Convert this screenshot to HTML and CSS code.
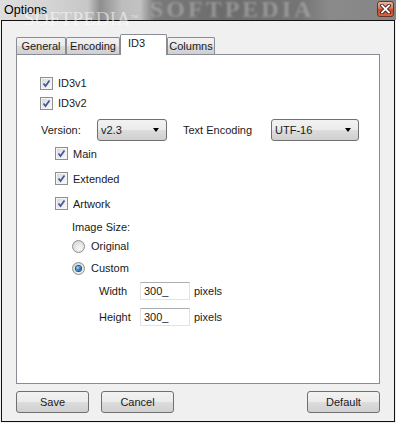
FILE: index.html
```html
<!DOCTYPE html>
<html>
<head>
    <meta charset="UTF-8">
    <title>Options</title>
    <link rel="stylesheet" href="styles.css">
</head>
<body>
    <div class="window">
        <div class="titlebar">
            <span class="title">Options</span>
            <span class="wm-big">SOFTPEDIA</span>
            <span class="close">
                <svg width="11" height="10" viewBox="0 0 11 10">
                    <path d="M2 1.5 L9 8.5 M9 1.5 L2 8.5" stroke="#3a1a12" stroke-width="3.6" stroke-linecap="square"/>
                    <path d="M2 1.5 L9 8.5 M9 1.5 L2 8.5" stroke="#fff" stroke-width="1.8" stroke-linecap="square"/>
                </svg>
            </span>
        </div>
        <span class="wm-small">SOFTPEDIA<sup>™</sup></span>

        <div class="frame">
            <div class="tabs">
                <div class="tab t-general">General</div>
                <div class="tab t-encoding">Encoding</div>
                <div class="tab t-id3 active">ID3</div>
                <div class="tab t-columns">Columns</div>
            </div>

            <div class="panel">
                <div class="row r-first">
                    <span class="cb"><svg viewBox="0 0 11 11"><path d="M2.5 5.5 L4.5 8 L8.5 2.5" fill="none" stroke="#3f5796" stroke-width="1.7"/></svg></span>
                    <span class="lbl">ID3v1</span>
                </div>
                <div class="row">
                    <span class="cb"><svg viewBox="0 0 11 11"><path d="M2.5 5.5 L4.5 8 L8.5 2.5" fill="none" stroke="#3f5796" stroke-width="1.7"/></svg></span>
                    <span class="lbl">ID3v2</span>
                </div>

                <div class="row r-version">
                    <span class="ver-label">Version:</span>
                    <span class="select sel-ver">v2.3<i class="arrow"></i></span>
                    <span class="enc-label">Text Encoding</span>
                    <span class="select sel-enc">UTF-16<i class="arrow"></i></span>
                </div>

                <div class="sub">
                    <div class="row r-tall">
                        <span class="cb"><svg viewBox="0 0 11 11"><path d="M2.5 5.5 L4.5 8 L8.5 2.5" fill="none" stroke="#3f5796" stroke-width="1.7"/></svg></span>
                        <span class="lbl">Main</span>
                    </div>
                    <div class="row r-tall">
                        <span class="cb"><svg viewBox="0 0 11 11"><path d="M2.5 5.5 L4.5 8 L8.5 2.5" fill="none" stroke="#3f5796" stroke-width="1.7"/></svg></span>
                        <span class="lbl">Extended</span>
                    </div>
                    <div class="row r-tall">
                        <span class="cb"><svg viewBox="0 0 11 11"><path d="M2.5 5.5 L4.5 8 L8.5 2.5" fill="none" stroke="#3f5796" stroke-width="1.7"/></svg></span>
                        <span class="lbl">Artwork</span>
                    </div>
                </div>

                <div class="size">
                    <div class="row r-size">Image Size:</div>
                    <div class="row r-orig">
                        <span class="rb"></span>
                        <span class="rlbl">Original</span>
                    </div>
                    <div class="row r-custom">
                        <span class="rb checked"><i></i></span>
                        <span class="rlbl">Custom</span>
                    </div>
                    <div class="dims">
                        <div class="row r-width">
                            <span class="dim-label">Width</span>
                            <span class="input">300_</span>
                            <span class="unit">pixels</span>
                        </div>
                        <div class="row r-height">
                            <span class="dim-label">Height</span>
                            <span class="input">300_</span>
                            <span class="unit">pixels</span>
                        </div>
                    </div>
                </div>
            </div>

            <div class="buttons">
                <span class="btn">Save</span>
                <span class="btn">Cancel</span>
                <span class="spacer"></span>
                <span class="btn">Default</span>
            </div>
        </div>
    </div>
</body>
</html>
```

FILE: styles.css
```css
html, body {
    margin: 0;
    padding: 0;
    background: #f0f0f0;
}
body {
    font-family: 'Liberation Sans', Arial, sans-serif;
    font-size: 11px;
    color: #1a1a1a;
}
.window {
    position: relative;
    width: 396px;
    height: 423px;
    overflow: hidden;
}
.titlebar {
    position: relative;
    height: 20px;
    display: flex;
    align-items: flex-start;
    justify-content: space-between;
    overflow: hidden;
    background: linear-gradient(to right, #dedede 0, #d4d4d4 50px, #c6c6c6 88px, #8e8e8e 100px, #bdbdbd 122px, #c2c2c2 140px, #7a7a7a 155px, #6c6c6c 220px, #747474 300px, #8a8a8a 330px, #858585 100%);
}
.title {
    position: relative;
    z-index: 1;
    padding: 3px 0 0 4px;
    font-size: 12.5px;
    line-height: 15px;
    color: #000;
}
.wm-big {
    position: absolute;
    left: 150px;
    top: -3px;
    font-family: 'Liberation Serif', serif;
    font-size: 24px;
    line-height: 24px;
    font-weight: bold;
    letter-spacing: 3px;
    color: rgba(190, 190, 190, 0.5);
    filter: blur(1px);
}
.wm-small {
    position: absolute;
    left: 24px;
    top: 9px;
    z-index: 3;
    font-family: 'Liberation Serif', serif;
    font-size: 19px;
    letter-spacing: 0.5px;
    line-height: 19px;
    color: rgba(255, 255, 255, 0.55);
}
.wm-small sup {
    font-size: 7px;
    vertical-align: top;
}
.close {
    position: relative;
    z-index: 1;
    width: 15px;
    height: 14px;
    margin: 1px 2px 0 0;
    border: 1px solid #6b3324;
    border-radius: 3px;
    display: flex;
    align-items: center;
    justify-content: center;
    background: linear-gradient(to bottom, #eeb4a0 0, #d9775a 45%, #c44a2c 55%, #d8643f 100%);
}

.frame {
    margin-left: 1px;
    width: 394px;
    height: 402px;
    box-sizing: border-box;
    border: 1px solid #111;
    padding: 13px 14px 0 14px;
    background: #f0f0f0;
}

/* tabs */
.tabs {
    display: flex;
    align-items: flex-end;
    height: 20px;
}
.tab {
    height: 17px;
    box-sizing: border-box;
    text-align: center;
    line-height: 16px;
    border: 1px solid #898c95;
    border-bottom: none;
    border-radius: 2px 2px 0 0;
    background: linear-gradient(to bottom, #f2f2f2 0, #ebebeb 50%, #dddddd 51%, #cfcfcf 100%);
}
.t-general { width: 50px; }
.t-encoding { width: 54px; }
.t-id3 { width: 47px; }
.t-columns { width: 48px; }
.tab.active {
    position: relative;
    z-index: 2;
    height: 21px;
    margin-bottom: -1px;
    padding: 1px 0 0 7px;
    text-align: left;
    line-height: 14px;
    background: #fff;
}

.panel {
    height: 330px;
    box-sizing: border-box;
    border: 1px solid #898c95;
    background: #fff;
    padding-left: 23px;
}

.row {
    display: flex;
    align-items: center;
    height: 20px;
}
.r-first {
    margin-top: 18px;
}
.r-version {
    margin-top: 5px;
    height: 23px;
    margin-left: 1px;
}
.r-tall {
    height: 25px;
}
.sub {
    padding-left: 15px;
}
.lbl {
    margin-left: 5px;
}
.rlbl {
    margin-left: 6px;
}

.cb {
    width: 11px;
    height: 11px;
    border: 1px solid #8e8f8f;
    background: linear-gradient(135deg, #d6d6d6 0, #ececec 55%, #fbfbfb 100%);
    box-shadow: inset 0 0 0 1px #f4f4f4;
    display: inline-flex;
}
.cb svg {
    width: 11px;
    height: 11px;
}

.ver-label {
    width: 56px;
}
.enc-label {
    width: 88px;
    margin-left: 16px;
}
.select {
    position: relative;
    height: 22px;
    box-sizing: border-box;
    border: 1px solid #707070;
    border-radius: 3px;
    padding-left: 3px;
    line-height: 20px;
    background: linear-gradient(to bottom, #f2f2f2 0, #ebebeb 50%, #dddddd 51%, #cfcfcf 100%);
}
.sel-ver {
    width: 70px;
}
.sel-enc {
    width: 88px;
}
.arrow {
    position: absolute;
    right: 7px;
    top: 8px;
    width: 0;
    height: 0;
    border-left: 3.5px solid transparent;
    border-right: 3.5px solid transparent;
    border-top: 4px solid #000;
}

.size {
    padding-left: 32px;
}
.r-size {
    height: 22px;
}
.r-orig {
    height: 14px;
    margin-top: 1px;
}
.r-custom {
    height: 24px;
    margin-top: 3px;
}
.rb {
    width: 11px;
    height: 11px;
    border-radius: 50%;
    border: 1px solid #8e8f8f;
    background: radial-gradient(circle at 60% 65%, #f6f6f6 0, #e4e4e4 50%, #c9c9c9 100%);
    display: inline-flex;
    align-items: center;
    justify-content: center;
}
.rb.checked i {
    width: 5px;
    height: 5px;
    border-radius: 50%;
    background: radial-gradient(circle at 35% 35%, #a5dcf8 0, #2a74b8 55%, #0d3f73 100%);
    box-shadow: 0 0 0 1px #1c4e7e;
}

.dims {
    padding-left: 27px;
}
.r-width {
    height: 22px;
}
.r-height {
    height: 23px;
    margin-top: 3px;
}
.dim-label {
    width: 41px;
}
.input {
    width: 50px;
    height: 18px;
    box-sizing: border-box;
    border: 1px solid #e2e3ea;
    border-top-color: #abadb3;
    background: #fff;
    padding-left: 3px;
    line-height: 16px;
}
.unit {
    margin-left: 4px;
}

.buttons {
    display: flex;
    margin-top: 7px;
}
.btn {
    width: 73px;
    height: 22px;
    box-sizing: border-box;
    border: 1px solid #707070;
    border-radius: 3px;
    text-align: center;
    line-height: 20px;
    background: linear-gradient(to bottom, #f2f2f2 0, #ebebeb 50%, #dddddd 51%, #cfcfcf 100%);
}
.btn + .btn {
    margin-left: 12px;
}
.spacer {
    flex: 1;
}
```
